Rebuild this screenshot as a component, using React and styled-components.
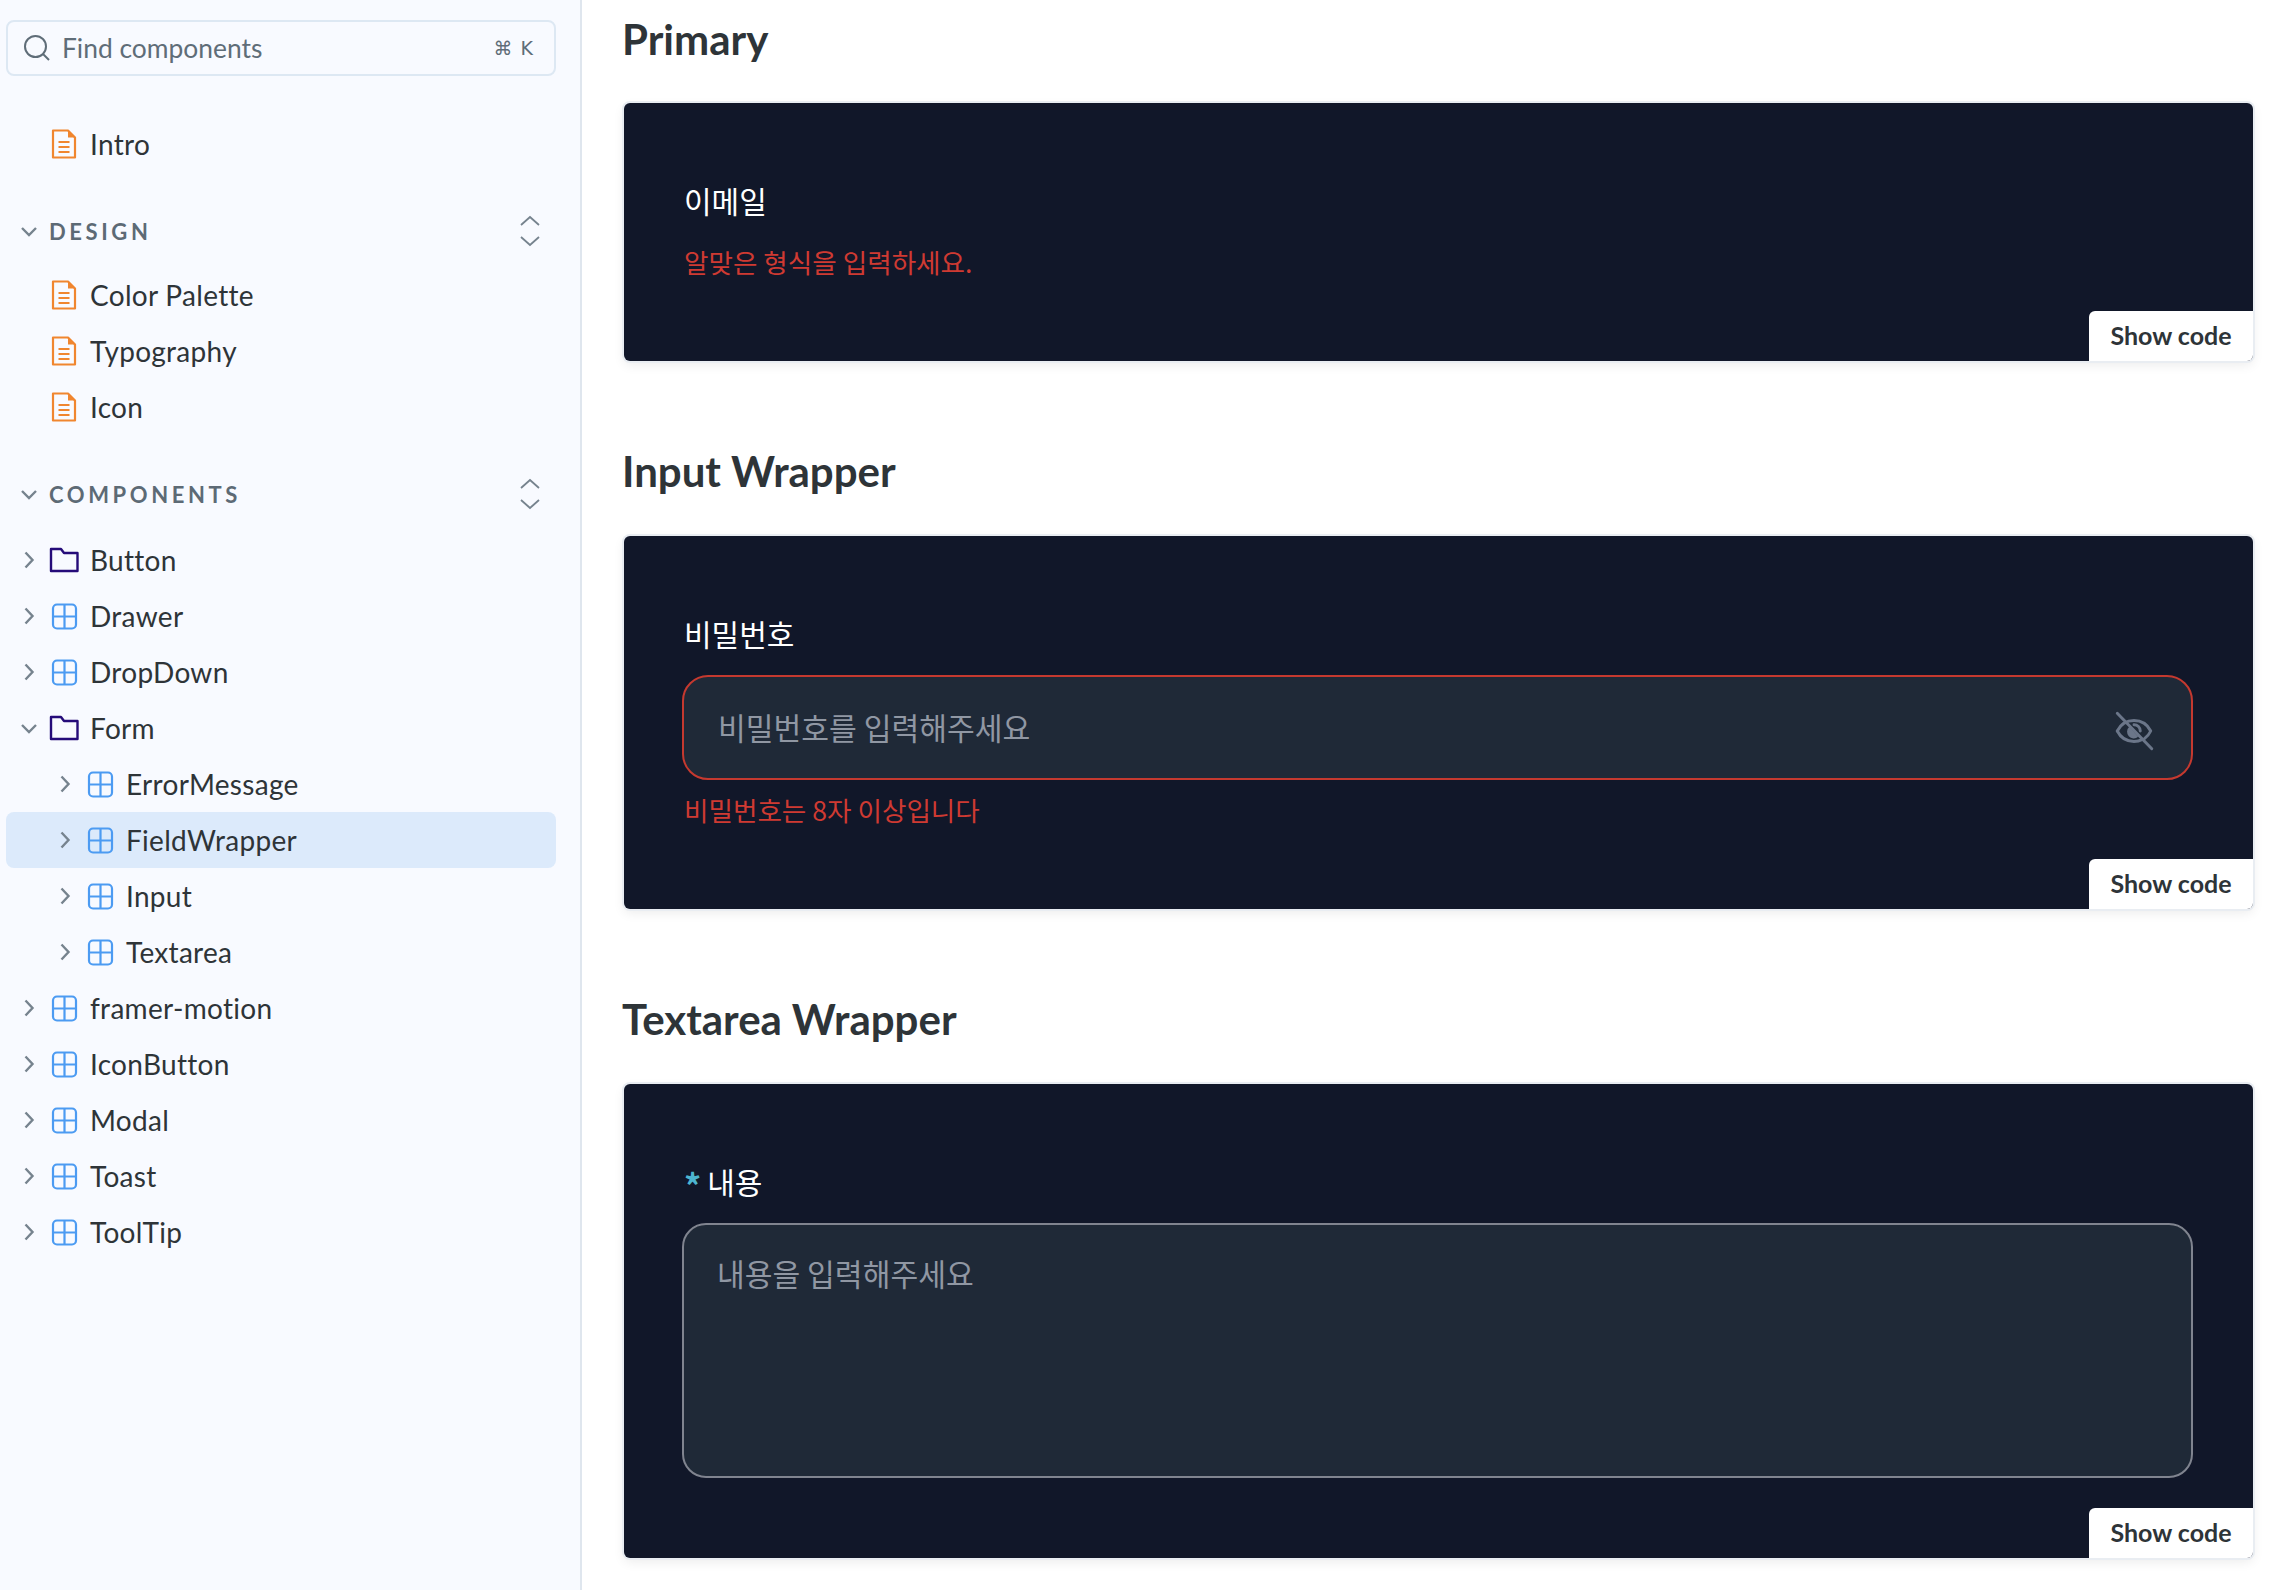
import React from 'react';
import styled, { createGlobalStyle } from 'styled-components';

const GlobalStyle = createGlobalStyle`
    html, body {
        margin: 0;
        padding: 0;
        height: 100%;
        overflow: hidden;
        background: #ffffff;
    }
    * {
        box-sizing: border-box;
    }
`;

const FONT = `Lato, "Noto Sans CJK KR", sans-serif`;
const KR_FONT = `"Noto Sans CJK KR", sans-serif`;

const Page = styled.div`
    display: flex;
    width: 2282px;
    height: 1590px;
    overflow: hidden;
    font-family: ${FONT};
`;

const Sidebar = styled.aside`
    width: 582px;
    flex-shrink: 0;
    height: 100%;
    padding: 20px 24px 0 6px;
    background: #f8faff;
    border-right: 2px solid #dfe6ee;
`;

const Search = styled.div`
    height: 56px;
    display: flex;
    align-items: center;
    padding: 0 20px 0 15px;
    margin-bottom: 40px;
    border: 2px solid #dde8f3;
    border-radius: 8px;
    color: #5f6d78;
`;

const SearchText = styled.span`
    flex: 1;
    margin-left: 11px;
    font-size: 26.4px;
`;

const Shortcut = styled.span`
    font-family: "DejaVu Sans", sans-serif;
    font-size: 19px;
    letter-spacing: 1px;
`;

const SectionHeader = styled.div`
    height: 56px;
    display: flex;
    align-items: center;
    padding-left: 14px;
    margin: 31px 0 ${({ $gap }) => $gap}px;
    color: #5d6a75;
`;

const SectionTitle = styled.span`
    flex: 1;
    margin-left: 11px;
    font-size: 22px;
    font-weight: 700;
    letter-spacing: 3.6px;
`;

const Expand = styled.svg`
    width: 22px;
    height: 32px;
    margin-right: 15px;
    fill: none;
    stroke: #76838e;
    stroke-width: 1.8;
`;

const Row = styled.div`
    height: 56px;
    display: flex;
    align-items: center;
    padding-left: ${({ $depth }) => 14 + $depth * 36}px;
    border-radius: 8px;
    background: ${({ $selected }) => ($selected ? '#dceafb' : 'transparent')};
    color: #2e3438;
    font-size: 28px;
    letter-spacing: 0.3px;
`;

const ChevronSlot = styled.svg`
    width: 18px;
    height: 18px;
    flex-shrink: 0;
    margin-right: ${({ $flush }) => ($flush ? 0 : 10.5)}px;
    fill: none;
    stroke: #76838e;
    stroke-width: 2.4;
    visibility: ${({ $hidden }) => ($hidden ? 'hidden' : 'visible')};
`;

const IconBox = styled.svg`
    width: 30px;
    height: 30px;
    flex-shrink: 0;
    margin-right: 11.5px;
    fill: none;
`;

const Main = styled.main`
    flex: 1;
    padding: 0 29px 0 40px;
`;

const Heading = styled.h2`
    height: 56px;
    margin: ${({ $first }) => ($first ? '11px' : '0')} 0 ${({ $first }) => ($first ? '36px' : '37px')};
    color: #2e3438;
    font-size: 42px;
    font-weight: 700;
    line-height: 56px;
`;

const Preview = styled.section`
    position: relative;
    margin: 0 0 ${({ $last }) => ($last ? '0' : '82px')} 2px;
    padding: 73px 60px 0;
    height: ${({ $h }) => $h}px;
    background: #111729;
    border-radius: 6px;
    box-shadow: 0 0 0 2px #e9edf2, 0 4px 12px rgba(0, 0, 0, 0.08);
`;

const Label = styled.div`
    height: 50px;
    color: #ffffff;
    font-family: ${KR_FONT};
    font-size: 30px;
    line-height: 48px;
    margin-bottom: ${({ $gap }) => $gap}px;
`;

const Required = styled.span`
    margin-right: 6px;
    color: #4db5d0;
    font-size: 34px;
    font-weight: 700;
    line-height: 0;
    vertical-align: -5px;
`;

const ErrorText = styled.div`
    color: #cf3a32;
    font-family: ${KR_FONT};
    font-size: 26.6px;
    line-height: 40px;
    margin-top: ${({ $top }) => $top}px;
`;

const InputBox = styled.div`
    height: 105px;
    margin-left: -2px;
    display: flex;
    align-items: center;
    justify-content: space-between;
    padding: 0 34px 2px 34px;
    background: #1f2937;
    border: 2px solid #c5392f;
    border-radius: 26px;
    color: #9097a3;
    font-family: ${KR_FONT};
    font-size: 30.2px;
`;

const TextareaBox = styled.div`
    height: 255px;
    margin-left: -2px;
    padding: 28px 33px;
    background: #1f2937;
    border: 2px solid #80848f;
    border-radius: 24px;
    color: #9097a3;
    font-family: ${KR_FONT};
    font-size: 30.2px;
    line-height: 40px;
`;

const EyeIcon = styled.svg`
    width: 46px;
    height: 46px;
    margin-top: 8px;
    fill: none;
    stroke: #6b7689;
    stroke-width: 2.8;
    stroke-linecap: round;
    stroke-linejoin: round;
`;

const ShowCode = styled.button`
    position: absolute;
    right: 0;
    bottom: 0;
    width: 164px;
    height: 50px;
    padding: 0 0 2px;
    border: 0;
    border-radius: 6px 0 6px 0;
    background: #ffffff;
    color: #2e3438;
    font-family: ${FONT};
    font-size: 25px;
    font-weight: 700;
`;

const Chevron = ({ open, hidden }) => (
    <ChevronSlot viewBox="0 0 18 18" $hidden={hidden}>
        {open ? <path d="M2 6l7 7 7-7" /> : <path d="M5.5 1.5L12.500 9l-7 7.500" />}
    </ChevronSlot>
);

const DocIcon = () => (
    <IconBox viewBox="0 0 30 30">
        <path d="M4 1.5h15l7 7v20H4z" stroke="#f0862f" strokeWidth="2.2" strokeLinejoin="round" />
        <path d="M19 1.5l7 7h-7z" fill="#f0862f" />
        <path d="M9.5 13h11M9.5 18h11M9.5 23h11" stroke="#f0862f" strokeWidth="2.2" />
    </IconBox>
);

const FolderIcon = () => (
    <IconBox viewBox="0 0 30 30">
        <path d="M2 4h10l3 4h13.5v18H2z" stroke="#250b79" strokeWidth="2.4" strokeLinejoin="round" />
    </IconBox>
);

const GridIcon = () => (
    <IconBox viewBox="0 0 30 30">
        <rect x="4" y="3.5" width="23" height="24" rx="4" stroke="#4c9bf2" strokeWidth="2.2" />
        <path d="M15.5 3.5v24M4 15.5h23" stroke="#4c9bf2" strokeWidth="2.2" />
    </IconBox>
);

const ICONS = { doc: DocIcon, folder: FolderIcon, grid: GridIcon };

const TreeRow = ({ icon, label, depth = 0, open, noChevron, selected }) => {
    const Icon = ICONS[icon];
    return (
        <Row $depth={depth} $selected={selected}>
            <Chevron open={open} hidden={noChevron} />
            <Icon />
            {label}
        </Row>
    );
};

const Section = ({ title, gap }) => (
    <SectionHeader $gap={gap}>
        <ChevronSlot viewBox="0 0 18 18" $flush>
            <path d="M2 6l7 7 7-7" />
        </ChevronSlot>
        <SectionTitle>{title}</SectionTitle>
        <Expand viewBox="0 0 22 32">
            <path d="M2 10l9-8 9 8M2 22l9 8 9-8" />
        </Expand>
    </SectionHeader>
);

const COMPONENT_ROWS = [
    { icon: 'folder', label: 'Button' },
    { icon: 'grid', label: 'Drawer' },
    { icon: 'grid', label: 'DropDown' },
    { icon: 'folder', label: 'Form', open: true },
    { icon: 'grid', label: 'ErrorMessage', depth: 1 },
    { icon: 'grid', label: 'FieldWrapper', depth: 1, selected: true },
    { icon: 'grid', label: 'Input', depth: 1 },
    { icon: 'grid', label: 'Textarea', depth: 1 },
    { icon: 'grid', label: 'framer-motion' },
    { icon: 'grid', label: 'IconButton' },
    { icon: 'grid', label: 'Modal' },
    { icon: 'grid', label: 'Toast' },
    { icon: 'grid', label: 'ToolTip' },
];

const App = () => (
    <Page>
        <GlobalStyle />
        <Sidebar>
            <Search>
                <svg width="28" height="28" viewBox="0 0 28 28" fill="none" stroke="#5f6d78" strokeWidth="2">
                    <circle cx="12.5" cy="12.5" r="10.5" />
                    <path d="M20 20l6 6" />
                </svg>
                <SearchText>Find components</SearchText>
                <Shortcut>⌘ K</Shortcut>
            </Search>
            <TreeRow icon="doc" label="Intro" noChevron />
            <Section title="DESIGN" gap={8} />
            <TreeRow icon="doc" label="Color Palette" noChevron />
            <TreeRow icon="doc" label="Typography" noChevron />
            <TreeRow icon="doc" label="Icon" noChevron />
            <Section title="COMPONENTS" gap={10} />
            {COMPONENT_ROWS.map((row) => (
                <TreeRow key={row.label} {...row} />
            ))}
        </Sidebar>
        <Main>
            <Heading $first>Primary</Heading>
            <Preview $h={258}>
                <Label $gap={0}>이메일</Label>
                <ErrorText $top={16}>알맞은 형식을 입력하세요.</ErrorText>
                <ShowCode>Show code</ShowCode>
            </Preview>
            <Heading>Input Wrapper</Heading>
            <Preview $h={373}>
                <Label $gap={16}>비밀번호</Label>
                <InputBox>
                    비밀번호를 입력해주세요
                    <EyeIcon viewBox="0 0 44 44">
                        <path d="M6 22c3-6 9-10 16-10s13 4 16 10c-1.400 3-3.500 5.500-6 7.300" />
                        <path d="M6 22c3 6 9 10 16 10 3 0 5.500-.6 8-2" />
                        <path d="M22 16a6 6 0 016 6" />
                        <path d="M17.500 18l8.500 9.500a6 6 0 01-8.500-9.500z" fill="#6b7689" stroke="none" />
                        <path d="M6 5l33 34" />
                    </EyeIcon>
                </InputBox>
                <ErrorText $top={10}>비밀번호는 8자 이상입니다</ErrorText>
                <ShowCode>Show code</ShowCode>
            </Preview>
            <Heading>Textarea Wrapper</Heading>
            <Preview $h={474} $last>
                <Label $gap={16}>
                    <Required>*</Required>내용
                </Label>
                <TextareaBox>내용을 입력해주세요</TextareaBox>
                <ShowCode>Show code</ShowCode>
            </Preview>
        </Main>
    </Page>
);

export default App;
